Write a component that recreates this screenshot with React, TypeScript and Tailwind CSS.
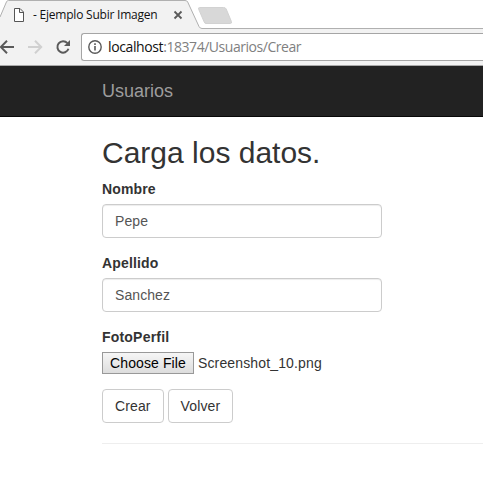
import React from "react";

function TabStrip() {
  return (
    <div className="relative h-[29px] w-full bg-white">
      <svg className="absolute inset-0" width="483" height="29" viewBox="0 0 483 29">
        <path d="M0 17 L6.5 1.8 Q7.2 .5 8.5 .5 H185 Q187 .5 187.7 2 L199 26.5 Q200 28.5 202 28.5 H483 V29 H0 Z" fill="#f2f2f2" />
        <path d="M0 17 L6.5 1.8 Q7.2 .5 8.5 .5 H185 Q187 .5 187.7 2 L199 26.5 Q200 28.5 202 28.5 H483" fill="none" stroke="#b0b0b0" />
        <path d="M199.5 7.5 H223.5 Q225.5 7.5 226.2 9 L231.4 21.5 Q232 23.5 230.5 23.5 H206 Q204.8 23.5 204.2 22 L198.7 9.3 Q198 7.5 199.5 7.5 Z" fill="#d8d8d8" stroke="#d2d2d2" />
        <path d="M14.5 8.5 H20 L23.5 12 V21.5 H14.5 Z M19.5 8.5 V12.5 H23.5" fill="#fff" stroke="#555" />
        <path d="M174.5 11.5 L181.5 18.5 M181.5 11.5 L174.5 18.5" stroke="#5a5a5a" strokeWidth="1.8" />
      </svg>
      <span className="relative block whitespace-pre pl-[33px] font-['Open_Sans',sans-serif] text-[12px] leading-[30px] tracking-[-0.22px] text-[#111]">- Ejemplo Subir Imagen</span>
    </div>
  );
}

function Toolbar() {
  return (
    <div className="flex h-[37px] items-start border-b border-[#a9a9a9] bg-[#f2f2f2] pt-1">
      <svg className="shrink-0" width="81" height="28" viewBox="0 33 81 28" fill="none" strokeWidth="2">
        <path d="M14 47 H1 M7 40.8 L.8 47 L7 53.2" stroke="#5a5a5a" />
        <path d="M28 47 H41 M35 40.8 L41.2 47 L35 53.2" stroke="#d0d0d0" />
        <path d="M67.4 43.2 A5.7 5.7 0 1 0 68.5 48.8" stroke="#5a5a5a" />
        <path d="M70 40 V46 H64 Z" fill="#5a5a5a" />
      </svg>
      <div className="flex h-7 flex-1 items-center rounded-l-[3px] border border-r-0 border-[#a5a5a5] bg-white pl-[6px]">
        <svg className="shrink-0" width="14" height="14" viewBox="0 0 14 14" fill="none">
          <circle cx="7" cy="7" r="6.2" stroke="#5a5a5a" strokeWidth="1.4" />
          <path d="M7 6 V10.5 M7 3.3 V4.9" stroke="#5a5a5a" strokeWidth="1.6" />
        </svg>
        <span className="ml-[6px] whitespace-nowrap font-['Open_Sans',sans-serif] text-[14px] leading-[26px] tracking-[-0.46px] text-[#808080]">
          <span className="tracking-[-0.38px] text-[#111]">localhost</span>:18374/Usuarios/Crear
        </span>
      </div>
    </div>
  );
}

function Field({ label, value }: { label: string; value: string }) {
  return (
    <div className="mb-[15px]">
      <label className="mb-[5px] block font-bold tracking-[0.15px]">{label}</label>
      <input
        className="block h-[34px] w-[280px] rounded-[4px] border border-[#ccc] bg-white px-3 py-[6px] text-[14px] leading-5 tracking-[0.08px] text-[#555] shadow-[inset_0_1px_1px_rgba(0,0,0,0.075)] outline-none"
        defaultValue={value}
      />
    </div>
  );
}

function Button({ children }: { children: React.ReactNode }) {
  return (
    <button className="h-[34px] rounded-[4px] border border-[#ccc] bg-white px-3 text-[14px] leading-5 tracking-[0.12px] text-[#333]">
      {children}
    </button>
  );
}

export default function App() {
  return (
    <div className="h-[498px] w-[483px] overflow-hidden bg-white font-['Liberation_Sans',Arial,sans-serif] text-[14px] leading-5 text-[#333]">
      <TabStrip />
      <Toolbar />
      <nav className="h-[51px] border-b border-[#080808] bg-[#222] pl-[102px]">
        <a className="block text-[18px] leading-[50px] text-[#9d9d9d]">Usuarios</a>
      </nav>
      <main className="pl-[102px] pt-[19px]">
        <h2 className="mb-[10px] text-[30px] font-medium leading-[33px]">Carga los datos.</h2>
        <Field label="Nombre" value="Pepe" />
        <Field label="Apellido" value="Sanchez" />
        <label className="mb-[5px] block font-bold tracking-[0.2px]">FotoPerfil</label>
        <div className="flex h-[22px] items-center gap-1">
          <button className="h-[22px] w-[92px] whitespace-nowrap border border-[#999] bg-gradient-to-b from-[#f6f6f6] to-[#dddddd] text-[14px] leading-5 tracking-[0.1px] text-black">Choose File</button>
          <span className="tracking-[0.14px]">Screenshot_10.png</span>
        </div>
        <div className="mt-[15px] flex gap-1">
          <Button>Crear</Button>
          <Button>Volver</Button>
        </div>
        <hr className="mt-5 border-t border-[#eee]" />
      </main>
    </div>
  );
}
